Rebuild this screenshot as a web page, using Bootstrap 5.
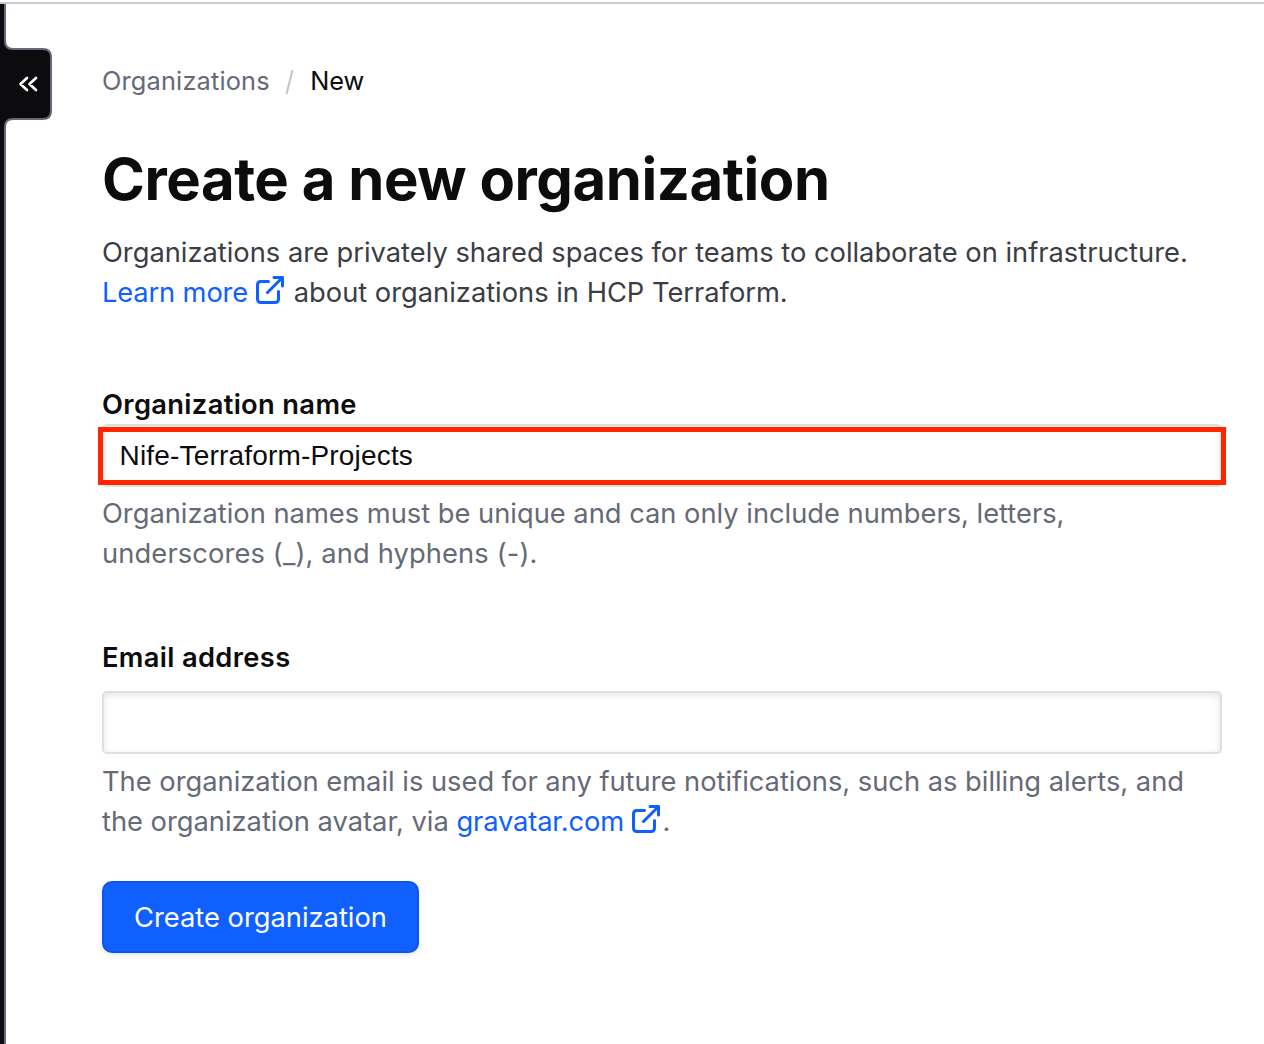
<!DOCTYPE html>
<html lang="en">
<head>
<meta charset="utf-8">
<meta name="viewport" content="width=device-width, initial-scale=1">
<title>Create a new organization</title>
<link href="https://cdn.jsdelivr.net/npm/bootstrap@5.3.0/dist/css/bootstrap.min.css" rel="stylesheet">
<style>
body{font-family:Inter,"Liberation Sans",sans-serif;color:#3b3d45;background:#fff}
.page{height:1044px;padding-top:2px}
.topline{height:2px;background:#ccccce}
.rail{width:6px;background:#0c0c0e;border-right:2px solid #656a76}
.toggle{left:0;top:36px;width:52px;height:96px}
.main-area{padding:57px 42px 0 96px}
.crumbs{font-size:25.35px;line-height:40px;letter-spacing:.17px}
.crumbs a{color:#656a76}
.crumbs .slash{width:9px;height:28px;margin:7px 16px 0 15.5px}
.crumbs .here{color:#0c0c0e;letter-spacing:-.1px}
.title{font-size:58px;line-height:72px;font-weight:700;letter-spacing:-.44px;color:#0c0c0e;margin:42px 0 18px}
.copy{font-size:27.3px;line-height:40px;letter-spacing:-.01px}
.copy a{color:#1060ff;letter-spacing:-.14px}
.copy svg{width:28px;height:28px;margin:-10px 2.5px 0 0}
.copy .ext-end{margin-left:1px;margin-right:2px}
.help-text{color:#656a76}
.wider{letter-spacing:.12px}
.field-label{height:39px;font-size:27.3px;line-height:40px;font-weight:600;letter-spacing:.34px;color:#0c0c0e}
.field-input{height:63px;border:2px solid #dedfe3;border-radius:5px;padding:0 15.5px;font:28px/40px "Liberation Sans",sans-serif;letter-spacing:.18px;color:#0c0c0e;box-shadow:inset 0 2px 6px rgba(59,61,69,.14)}
.highlight{left:-4px;top:3px;width:1128px;height:58px;border:5px solid #ff2600}
.org-group{margin-top:72px}
.org-group .help-text{margin-top:7px}
.email-group{margin-top:64px}
.email-group .field-label{margin-bottom:14px}
.go{background:#1060ff;color:#fff;font-size:27.3px;width:317px;height:72px;border:2px solid #0c56e9;border-radius:10px;margin-top:39px;padding:2px 0 0;box-shadow:0 2px 4px rgba(59,61,69,.14)}
</style>
</head>
<body>
<div class="page d-flex flex-column position-relative overflow-hidden">
  <div class="topline"></div>
  <div class="d-flex flex-grow-1">
    <div class="rail flex-shrink-0"></div>
    <button class="toggle position-absolute border-0 p-0 bg-transparent" aria-label="Collapse sidebar">
      <svg class="d-block" width="52" height="96" viewBox="0 0 52 96" fill="none">
        <path d="M0 0H5V5Q5 13 13 13H43Q51 13 51 21V75Q51 83 43 83H13Q5 83 5 91V96H0Z" fill="#0c0c0e"/>
        <path d="M5 0V5Q5 13 13 13H43Q51 13 51 21V75Q51 83 43 83H13Q5 83 5 91V96" stroke="#656a76" stroke-width="2"/>
        <path d="M27 42L20.5 48L27 54M36 42L29.5 48L36 54" stroke="#fff" stroke-width="2.7" stroke-linecap="round" stroke-linejoin="round"/>
      </svg>
    </button>
    <main class="main-area flex-grow-1">
      <nav class="crumbs d-flex" aria-label="breadcrumb">
        <a href="#" class="text-decoration-none">Organizations</a>
        <svg class="slash" viewBox="0 0 9 28"><path d="M7.5 2L1.5 26" stroke="#c2c5cb" stroke-width="2"/></svg>
        <span class="here">New</span>
      </nav>
      <h1 class="title">Create a new organization</h1>
      <p class="copy mb-0">Organizations are privately shared spaces for teams to collaborate on infrastructure.<br><a href="#" class="text-decoration-none">Learn more <svg viewBox="0 0 28 28" fill="none" stroke="#1060ff" stroke-width="3" stroke-linecap="round" stroke-linejoin="round"><path d="M12.5 5.5H5Q1.5 5.5 1.5 9V23Q1.5 26.5 5 26.5H19Q22.5 26.5 22.5 23V15.5M11.5 16.5L26.5 1.5M18 1.5H26.5V10"/></svg></a> about organizations in HCP Terraform.</p>
      <div class="org-group">
        <label for="org" class="field-label d-block">Organization name</label>
        <div class="position-relative">
          <input id="org" type="text" class="field-input d-block w-100" value="Nife-Terraform-Projects">
          <div class="highlight position-absolute pe-none"></div>
        </div>
        <p class="copy help-text mb-0">Organization names must be unique and can only include numbers, letters,<br><span class="wider">underscores (_), and hyphens (-).</span></p>
      </div>
      <div class="email-group">
        <label for="email" class="field-label d-block">Email address</label>
        <input id="email" type="email" class="field-input d-block w-100">
        <p class="copy help-text mb-0 mt-2">The organization email is used for any future notifications, such as billing alerts, and<br>the organization avatar, via <a href="#" class="text-decoration-none">gravatar.com <svg class="ext-end" viewBox="0 0 28 28" fill="none" stroke="#1060ff" stroke-width="3" stroke-linecap="round" stroke-linejoin="round"><path d="M12.5 5.5H5Q1.5 5.5 1.5 9V23Q1.5 26.5 5 26.5H19Q22.5 26.5 22.5 23V15.5M11.5 16.5L26.5 1.5M18 1.5H26.5V10"/></svg></a>.</p>
      </div>
      <button type="button" class="go d-block">Create organization</button>
    </main>
  </div>
</div>
<script src="https://cdn.jsdelivr.net/npm/bootstrap@5.3.0/dist/js/bootstrap.bundle.min.js"></script>
</body>
</html>
